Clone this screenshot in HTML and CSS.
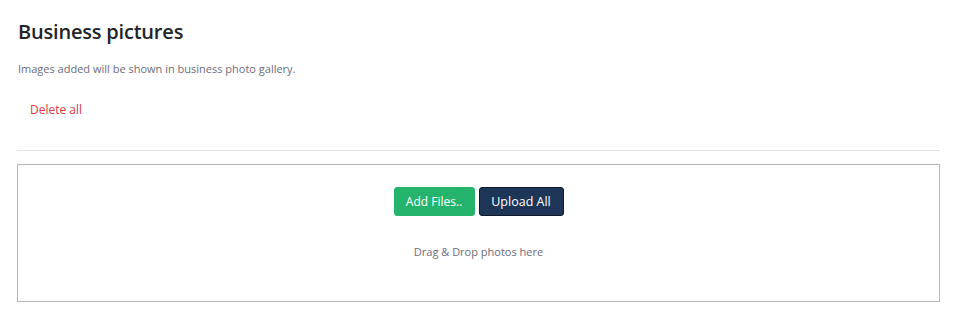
FILE: index.html
```html
<!DOCTYPE html>
<html>
<head>
<meta charset="utf-8">
<link rel="stylesheet" href="styles.css">
</head>
<body>
<div class="page">
  <h2 class="title">Business pictures</h2>
  <p class="subtitle">Images added will be shown in business photo gallery.</p>
  <div class="actions"><a class="delete-all" href="#">Delete all</a></div>
  <hr class="divider">
  <div class="dropzone">
    <div class="buttons">
      <button class="btn btn-add">Add Files..</button>
      <button class="btn btn-upload">Upload All</button>
    </div>
    <p class="hint">Drag &amp; Drop photos here</p>
  </div>
</div>
</body>
</html>
```
FILE: styles.css
```css
html, body {
  margin: 0;
  padding: 0;
  background: #fff;
}
body {
  font-family: "Open Sans", "Noto Sans", sans-serif;
  color: #212529;
}
.page {
  padding: 17px 16px 0 17px;
}
.title {
  margin: 0 0 0 1px;
  font-size: 20px;
  font-weight: 600;
  line-height: 30px;
  color: #212529;
  letter-spacing: -0.2px;
}
.subtitle {
  margin: 14px 0 0 1px;
  font-size: 11px;
  line-height: 16px;
  color: #6c6c7a;
}
.actions {
  margin: 22px 0 0 13px;
  line-height: 18px;
}
.delete-all {
  font-size: 12px;
  color: #dc3545;
  text-decoration: none;
}
.divider {
  margin: 31px 0 0 0;
  border: 0;
  border-top: 1px solid #e3e3e3;
}
.dropzone {
  margin-top: 13px;
  border: 1px solid #b5b5b5;
  height: 136px;
  box-sizing: content-box;
  display: flex;
  flex-direction: column;
  align-items: center;
}
.buttons {
  display: flex;
  gap: 4px;
  margin-top: 22px;
}
.btn {
  font-family: "Open Sans", "Noto Sans", sans-serif;
  font-size: 12px;
  height: 29px;
  border-radius: 3px;
  padding: 0;
  color: #fff;
  cursor: pointer;
  white-space: nowrap;
  text-align: center;
}
.btn-add {
  background: #25b46c;
  border: 1px solid #25b46c;
  width: 81px;
}
.btn-upload {
  background: #1d3557;
  border: 1px solid #0e1a2c;
  width: 85px;
  font-size: 12.5px;
}
.hint {
  margin: 28px 0 0 0;
  font-size: 11px;
  line-height: 16px;
  color: #6c6c7a;
}
```
